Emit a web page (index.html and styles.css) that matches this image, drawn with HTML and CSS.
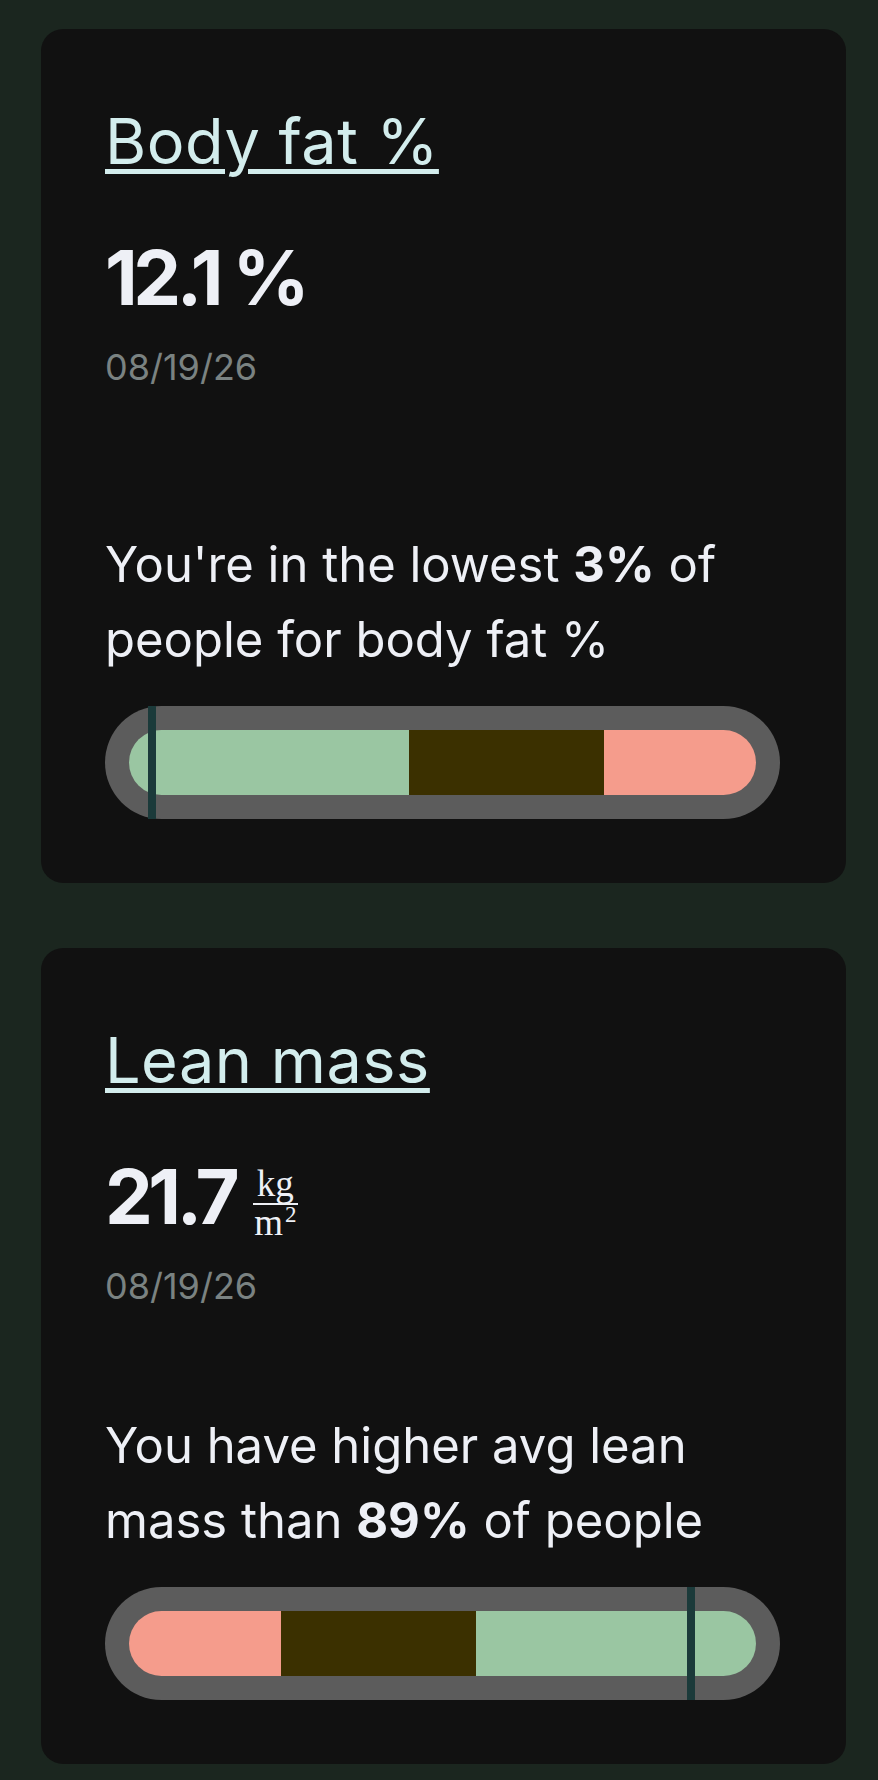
FILE: index.html
```html
<!DOCTYPE html>
<html lang="en">

<head>
    <meta charset="UTF-8">
    <meta name="viewport" content="width=device-width, initial-scale=1.0">
    <title>Body composition</title>
    <link rel="stylesheet" href="styles.css">
</head>

<body>

    <div id="stats">

        <div class="card card-fat">
            <h2 class="card-title"><a href="#">Body fat %</a></h2>
            <div class="value">12.1 %</div>
            <div class="date">08/19/26</div>
            <p class="insight">You're in the lowest <b>3%</b> of people for body fat %</p>
            <div class="scale">
                <div class="track">
                    <span class="seg good" style="width: 44.7%"></span>
                    <span class="seg mid" style="width: 31.1%"></span>
                    <span class="seg bad" style="width: 24.2%"></span>
                </div>
                <span class="marker" style="left: calc(24px + (100% - 48px) * 0.03)"></span>
            </div>
        </div>

        <div class="card card-lean">
            <h2 class="card-title"><a href="#">Lean mass</a></h2>
            <div class="value">21.7 <span class="frac"><span class="num">kg</span><span class="den">m<sup>2</sup></span></span></div>
            <div class="date">08/19/26</div>
            <p class="insight">You have higher avg lean mass than <b>89%</b> of people</p>
            <div class="scale">
                <div class="track">
                    <span class="seg bad" style="width: 24.2%"></span>
                    <span class="seg mid" style="width: 31.1%"></span>
                    <span class="seg good" style="width: 44.7%"></span>
                </div>
                <span class="marker" style="left: calc(24px + (100% - 48px) * 0.89)"></span>
            </div>
        </div>

    </div>

</body>

</html>
```

FILE: styles.css
```css
* {
    box-sizing: border-box;
}

body {
    margin: 0;
    background: #1b261f;
    color: #eef0f6;
    font-family: Inter, "Noto Sans", sans-serif;
}

#stats {
    display: flex;
    flex-direction: column;
    gap: 65px;
    padding: 29px 32px 0 41px;
}

.card {
    background: #111111;
    border-radius: 22px;
    padding: 74px 66px 64px 64px;
}

.card-title {
    margin: 0;
    font-size: 63px;
    font-weight: 400;
    line-height: 76px;
    letter-spacing: 0.5px;
}

.card-title a {
    color: #d3eded;
    text-decoration: underline;
    text-decoration-thickness: 5px;
    text-underline-offset: 5px;
}

.value {
    margin-top: 52px;
    font-size: 76px;
    font-weight: 700;
    line-height: 92px;
    letter-spacing: -4.5px;
}

/* kg / m2 unit */
.frac {
    display: inline-flex;
    flex-direction: column;
    align-items: center;
    vertical-align: 28px;
    margin-left: 4px;
    font-family: "Liberation Serif", serif;
    font-size: 37px;
    font-weight: 400;
    line-height: 34px;
    letter-spacing: 0;
}

.frac .num {
    padding: 0 4px 2px 4px;
    border-bottom: 2px solid #eef0f6;
}

.frac .den {
    padding-top: 1px;
}

.frac sup {
    font-size: 23px;
    vertical-align: 13px;
    line-height: 0;
    margin-left: 2px;
}

.date {
    margin-top: 22px;
    font-size: 36px;
    line-height: 44px;
    color: #7a8281;
}

.insight {
    margin: 138px 0 0 0;
    font-size: 49px;
    line-height: 75px;
}

.card-lean .insight {
    margin-top: 100px;
}

.insight b {
    font-weight: 700;
}

.scale {
    position: relative;
    margin-top: 29px;
    padding: 24px;
    background: #5c5c5c;
    border-radius: 57px;
}

.track {
    display: flex;
    height: 65px;
    border-radius: 33px;
    overflow: hidden;
}

.seg.good {
    background: #9ac6a2;
}

.seg.mid {
    background: #3b3000;
}

.seg.bad {
    background: #f59c8c;
}

.marker {
    position: absolute;
    top: 0;
    bottom: 0;
    width: 8px;
    background: #1b3a3a;
}
```
